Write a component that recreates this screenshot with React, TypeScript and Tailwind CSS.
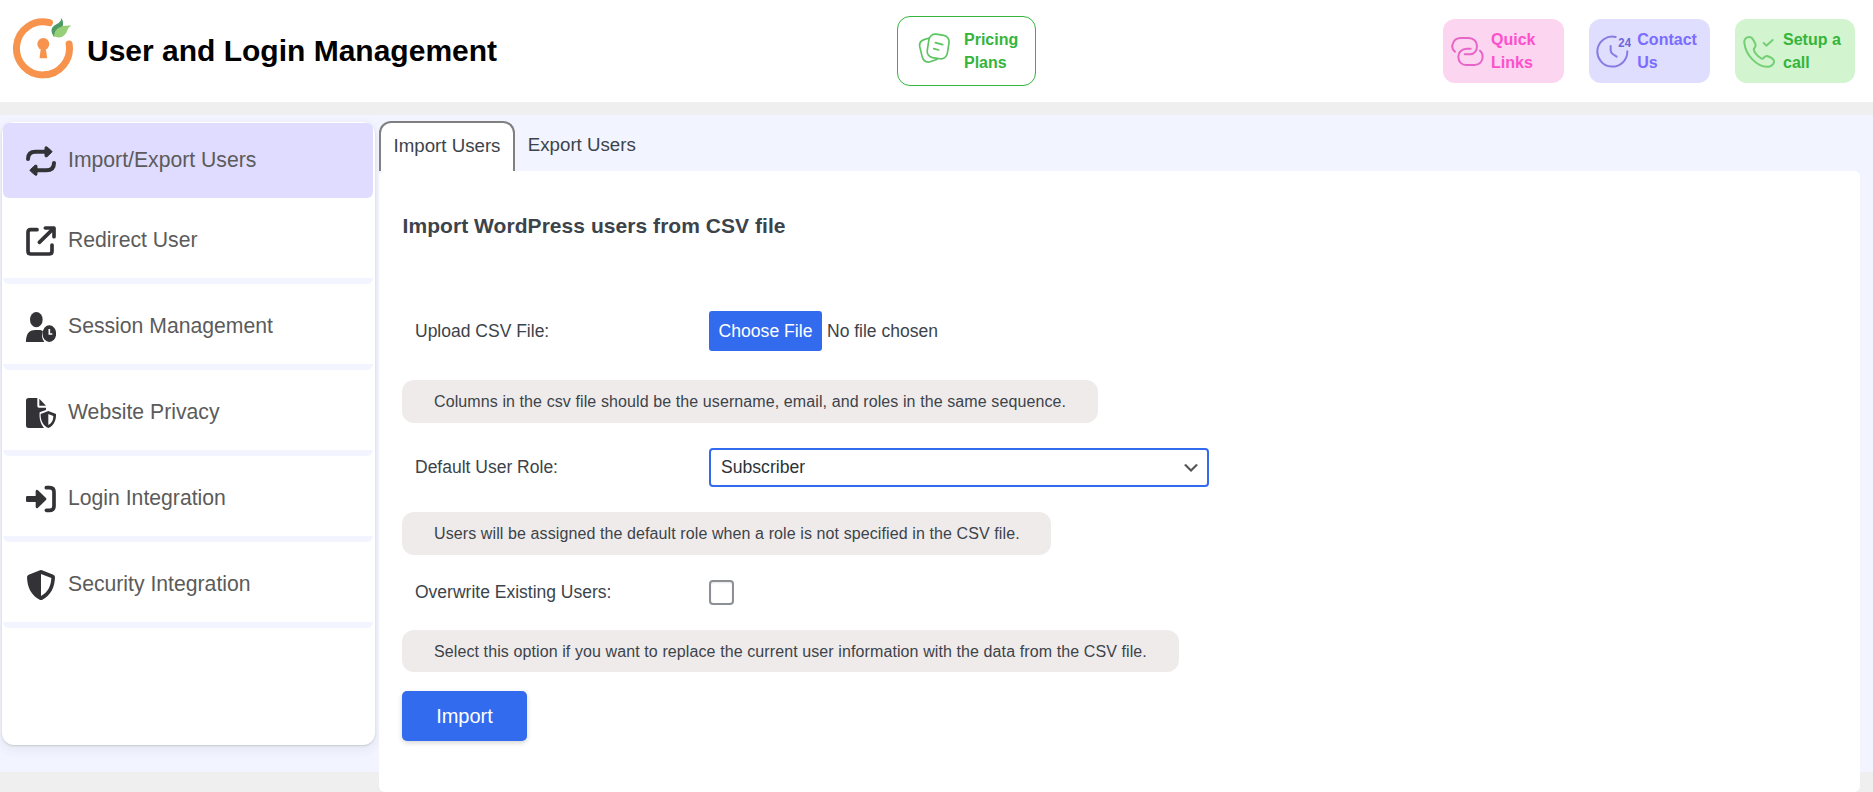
import type { ReactNode } from "react";

function Logo() {
  return (
    <svg viewBox="12 16 62 64" className="h-[64px] w-[62px] shrink-0" fill="none">
      <path d="M49.5 22.7 A26.5 26.5 0 1 0 69.1 44" stroke="#f7934d" strokeWidth="7" strokeLinecap="round" />
      <circle cx="43.3" cy="44" r="6" fill="#f7934d" />
      <path d="M41 47 L39.5 58.300 H47.200 L45.6 47Z" fill="#f7934d" />
      <path d="M54 37 C50 31 51 27 56 24.5 Q61 22 61.6 18 C64 22.500 63 26 62 29Z" fill="#4d9a66" />
      <path d="M71.300 25.500 C61 25 54.500 28 54 36 C60 39.500 65.500 36 67 31 Q68 27.500 71.300 25.500Z" fill="#97cf78" />
    </svg>
  );
}

function CardsIcon() {
  return (
    <svg viewBox="114 97 99 96" className="h-[32px] w-[33px] shrink-0" fill="none" stroke="#5cc460" strokeWidth="5" strokeLinecap="round" strokeLinejoin="round">
      <rect x="144" y="105" width="61" height="71" rx="19" transform="rotate(9 175 140)" />
      <path d="M148 115 L132 120 Q117 125 119 140 L127 173 Q132 189 148 187 L172 179" />
      <path d="M166 129 L188 135 M161 147 L176 151" />
    </svg>
  );
}

function LinkIcon() {
  return (
    <svg viewBox="63 105 99 99" className="size-[33px] shrink-0" fill="none" stroke="#e765c6" strokeWidth="6" strokeLinecap="round">
      <path d="M75 155 C67 148 65 138 69 130 C73 118 81 114 92 114 H116 C130 114 141 124 141 138 C141 152 133 162 120 163 H104" />
      <path d="M122 146 H110 C96 146 85 156 85 170 C85 186 96 195 108 195 H134 C148 195 158 184 158 170 C158 162 156 157 150 152" />
    </svg>
  );
}

function ClockIcon() {
  return (
    <svg viewBox="497 102 106 102" className="h-[34px] w-[35.300px] shrink-0" fill="none" stroke="#857de2" strokeWidth="6" strokeLinecap="round" strokeLinejoin="round">
      <path d="M556 111 A45 45 0 1 0 591 154" />
      <path d="M541 138 V150 Q541 158 547 162 L559 170" />
      <text x="564" y="141" fontSize="40" fontWeight="700" fontFamily="Liberation Sans, Arial, sans-serif" fill="#6d64d8" stroke="none" textLength="38" lengthAdjust="spacingAndGlyphs">24</text>
    </svg>
  );
}

function PhoneIcon() {
  return (
    <svg viewBox="940 103 99 99" className="size-[33px] shrink-0" fill="none" stroke="#74cf75" strokeWidth="6" strokeLinecap="round" strokeLinejoin="round">
      <path d="M944 126 C943 117 948 110 957 109 C964 108 968 112 971 118 L977 129 C980 136 976 140 973 144 C970 152 984 168 996 174 C1002 176 1004 165 1012 166 C1020 168 1028 172 1032 178 C1036 186 1028 196 1017 198 C1000 200 984 192 968 176 C954 162 946 146 944 126Z" />
      <path d="M1002 127 L1010 135 L1029 118" />
    </svg>
  );
}

function MenuSvg({ children }: { children: ReactNode }) {
  return (
    <svg viewBox="0 0 90 90" className="size-[30px] shrink-0" fill="#333236" stroke="none">
      {children}
    </svg>
  );
}

function RepeatIcon() {
  return (
    <MenuSvg>
      {["", "rotate(180 45 45)"].map((t) => (
        <g key={t} transform={t}>
          <path d="M6 39 C6 25 14 17 29 17 H60" fill="none" stroke="#333236" strokeWidth="12" strokeLinecap="round" />
          <path d="M57 4 Q59 1 63 3 L77 15 Q79 17 77 19 L63 32 Q59 34 57 31Z" stroke="#333236" strokeWidth="3" />
        </g>
      ))}
    </MenuSvg>
  );
}

function RedirectIcon() {
  return (
    <MenuSvg>
      <g fill="none" stroke="#333236" strokeWidth="11" strokeLinecap="round" strokeLinejoin="round">
        <path d="M33 11 H14 Q6 11 6 19 V76 Q6 84 14 84 H70 Q78 84 78 76 V57" />
        <path d="M40 49 L82 8" />
        <path d="M58 6 H84 V32" />
      </g>
    </MenuSvg>
  );
}

function UserClockIcon() {
  return (
    <MenuSvg>
      <ellipse cx="31" cy="23" rx="19" ry="23" />
      <path d="M0 90 V84 C2 62 12 54 28 54 H38 C44 54 48 55 51 58 C46 68 47 80 55 90Z" />
      <ellipse cx="70" cy="65" rx="20.500" ry="25" />
      <path d="M70 51 V66 H79" fill="none" stroke="#fff" strokeWidth="5" />
    </MenuSvg>
  );
}

function FileShieldIcon() {
  return (
    <MenuSvg>
      <path d="M8 0 H34 V24 Q34 29 39 29 H60 V36 L41 43 C39 62 44 78 54 90 H8 Q0 90 0 82 V8 Q0 0 8 0Z" />
      <path d="M40 2 L60 23 H40Z" />
      <path d="M67 39 L90 48 C91 68 82 84 67 90 C52 84 43 68 44 48Z" />
      <path d="M67 48 L82 54 C82 68 77 76 67 81Z" fill="#fff" />
    </MenuSvg>
  );
}

function LoginIcon() {
  return (
    <MenuSvg>
      <path d="M4 36 H29 V21 Q31 15 36 19 L60 42 Q63 45 60 48 L36 71 Q31 75 29 69 V54 H4 Q0 54 0 50 V40 Q0 36 4 36Z" />
      <path d="M61 11 H71 Q84 11 84 24 V66 Q84 79 71 79 H61" fill="none" stroke="#333236" strokeWidth="11" strokeLinecap="round" />
    </MenuSvg>
  );
}

function ShieldIcon() {
  return (
    <MenuSvg>
      <path d="M42 1 Q45 -0.500 48 1 L82 14 Q87 16 87 22 C86 54 73 77 49 89 Q45 91 41 89 C17 77 4 54 3 22 Q3 16 8 14Z" />
      <path d="M45 12 L76 24 C75 50 64 68 45 78Z" fill="#fff" />
    </MenuSvg>
  );
}

const menu = [
  { label: "Redirect User", icon: <RedirectIcon /> },
  { label: "Session Management", icon: <UserClockIcon /> },
  { label: "Website Privacy", icon: <FileShieldIcon /> },
  { label: "Login Integration", icon: <LoginIcon /> },
  { label: "Security Integration", icon: <ShieldIcon /> },
];

function MenuLabel({ children }: { children: ReactNode }) {
  return <span className="pb-[3px] text-[21.200px] leading-6 text-[#5b5b5b]">{children}</span>;
}

function Note({ className, children }: { className: string; children: ReactNode }) {
  return (
    <div className={`flex items-center self-start rounded-[12px] bg-[#efebea] pl-8 text-base leading-5 tracking-[0.100px] whitespace-nowrap ${className}`}>
      {children}
    </div>
  );
}

function Row({ label, className, children }: { label: string; className: string; children: ReactNode }) {
  return (
    <div className={`flex items-center ${className}`}>
      <label className="w-[307px] pb-px pl-[13px] text-[17.500px] leading-6">{label}</label>
      {children}
    </div>
  );
}

export default function App() {
  return (
    <div className="flex h-[792px] w-[1873px] flex-col overflow-hidden bg-[#efefef] font-['Liberation_Sans',Arial,sans-serif] text-[#3c434a]">
      <header className="flex h-[102px] shrink-0 items-center bg-white pl-[12px] text-base leading-[23px] font-bold">
        <div className="flex w-[885px] items-center pb-[6px]">
          <Logo />
          <h1 className="pt-[5px] pl-[13px] text-[30px] leading-9 text-black">User and Login Management</h1>
        </div>
        <button className="flex h-[70px] w-[139px] items-center rounded-[13px] border border-[#34b53a] pl-[20px] text-left text-[#34b53a]">
          <span className="pb-[6px]"><CardsIcon /></span>
          <span className="w-[60px] pl-[13px]">Pricing Plans</span>
        </button>
        <div className="ml-[407px] flex gap-[25px]">
          <button className="flex h-[64px] w-[121px] items-center rounded-[12px] bg-[#fcd6f0] pl-[8px] text-left text-[#ff4fcb]">
            <LinkIcon />
            <span className="w-[60px] pl-[7px]">Quick Links</span>
          </button>
          <button className="flex h-[64px] w-[121px] items-center rounded-[12px] bg-[#dfdeff] pl-[7px] text-left text-[#7a6cff]">
            <ClockIcon />
            <span className="w-[70px] pl-[6px]">Contact Us</span>
          </button>
          <button className="flex h-[64px] w-[120px] items-center rounded-[12px] bg-[#d2f4cf] pl-[8px] text-left text-[#34b53a]">
            <PhoneIcon />
            <span className="w-[72px] pl-[7px]">Setup a<br />call</span>
          </button>
        </div>
      </header>

      <main className="mt-[13px] flex h-[657px] shrink-0 items-start bg-[#f2f5ff]">
        <nav className="mt-[7px] ml-[2px] flex h-[623px] w-[373px] shrink-0 flex-col rounded-[12px] bg-white pt-px pl-px shadow-[0_1px_2px_rgba(60,64,67,0.2),0_4px_8px_3px_rgba(60,64,67,0.05)]">
          <a className="flex h-[75px] w-[370px] items-center gap-[12px] rounded-[6px] bg-[#e0dcff] pt-px pl-[23px]">
            <RepeatIcon />
            <MenuLabel>Import/Export Users</MenuLabel>
          </a>
          {menu.map((m) => (
            <a key={m.label} className="flex h-[86px] w-[370px] items-center gap-[12px] rounded-[6px] border-b-[6px] border-[#f2f5ff] pt-[6px] pl-[23px]">
              {m.icon}
              <MenuLabel>{m.label}</MenuLabel>
            </a>
          ))}
        </nav>

        <section className="ml-[4px] flex w-[1481px] flex-col">
          <div className="flex h-[56px] items-end text-[18.700px] leading-6">
            <div className="h-[50px] w-[136px] rounded-t-[12px] border-2 border-b-0 border-[#808080] bg-white pt-[11px] pl-[12.500px] whitespace-nowrap">
              Import Users
            </div>
            <div className="h-[50px] pt-[12px] pl-[12.800px] whitespace-nowrap">Export Users</div>
          </div>
          <div className="flex h-[621px] flex-col rounded-[6px] bg-white pt-[43px] pl-[23px]">
            <h2 className="pl-[0.600px] text-[21px] leading-6 font-bold tracking-[0.050px]">Import WordPress users from CSV file</h2>
            <Row label="Upload CSV File:" className="mt-[73px] h-[40px]">
              <button className="h-[40px] w-[113px] rounded-[3px] bg-[#326bee] text-[17.600px] whitespace-nowrap text-white">Choose File</button>
              <span className="pl-[5px] text-[17.500px]">No file chosen</span>
            </Row>
            <Note className="mt-[29px] h-[43px] w-[696px]">
              Columns in the csv file should be the username, email, and roles in the same sequence.
            </Note>
            <Row label="Default User Role:" className="mt-[25px] h-[39px]">
              <div className="flex h-[39px] w-[500px] items-center justify-between rounded-[4px] border-2 border-[#326bee] pr-[6px] pl-[10px] text-[17.600px] text-[#2c3338]">
                Subscriber
                <svg viewBox="0 0 20 20" className="size-[20px]" fill="#555">
                  <path d="M5 6l5 5 5-5 2 1-7 7-7-7 2-1z" />
                </svg>
              </div>
            </Row>
            <Note className="mt-[25px] h-[43px] w-[649px]">
              Users will be assigned the default role when a role is not specified in the CSV file.
            </Note>
            <Row label="Overwrite Existing Users:" className="mt-[25px] h-[25px]">
              <span className="size-[25px] rounded-[4px] border-2 border-[#8c8f94] bg-white shadow-[inset_0_1px_2px_rgba(0,0,0,0.1)]" />
            </Row>
            <Note className="mt-[25px] h-[42px] w-[777px] pt-px">
              Select this option if you want to replace the current user information with the data from the CSV file.
            </Note>
            <button className="mt-[19px] h-[50px] w-[125px] rounded-[5px] bg-[#326bee] text-[20px] text-white shadow-[0_2px_5px_rgba(0,0,0,0.16)]">
              Import
            </button>
          </div>
        </section>
      </main>
    </div>
  );
}
